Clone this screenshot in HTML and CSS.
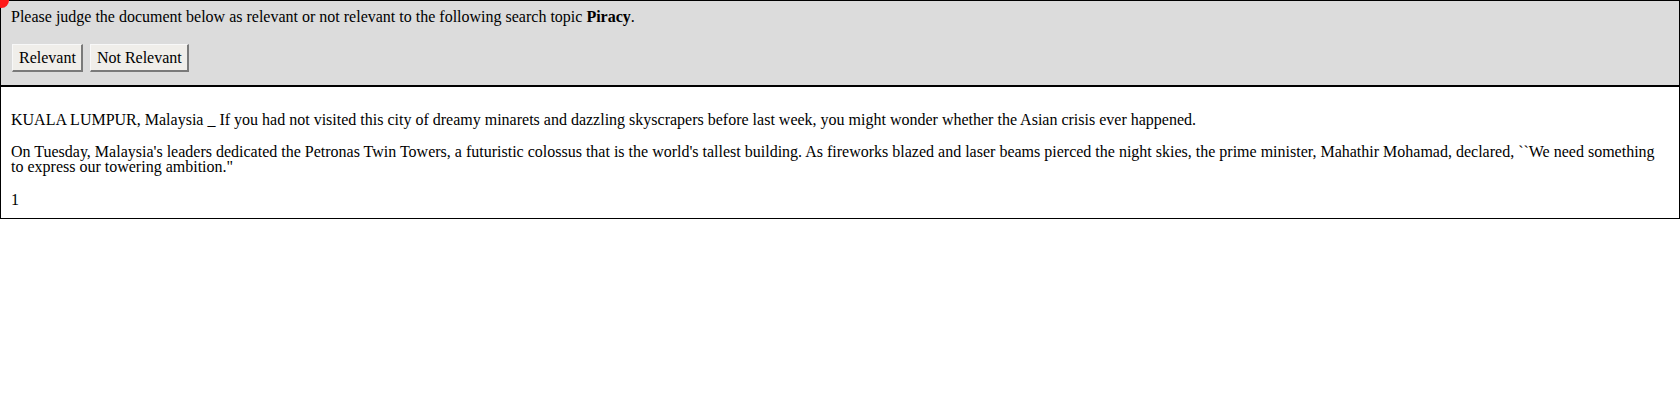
FILE: index.html
```html
<!DOCTYPE html>
<html>
<head>
<meta charset="utf-8">
<link rel="stylesheet" href="styles.css">
</head>
<body>
<span class="dot"></span>
<div class="header">
  <p class="question">Please judge the document below as relevant or not relevant to the following search topic <b>Piracy</b>.</p>
  <div class="actions">
    <button class="btn">Relevant</button>
    <button class="btn">Not Relevant</button>
  </div>
</div>
<div class="doc">
  <p class="para">KUALA LUMPUR, Malaysia _ If you had not visited this city of dreamy minarets and dazzling skyscrapers before last week, you might wonder whether the Asian crisis ever happened.</p>
  <p class="para">On Tuesday, Malaysia's leaders dedicated the Petronas Twin Towers, a futuristic colossus that is the world's tallest building. As fireworks blazed and laser beams pierced the night skies, the prime minister, Mahathir Mohamad, declared, ``We need something to express our towering ambition."</p>
  <p class="page">1</p>
</div>
</body>
</html>
```
FILE: styles.css
```css
html, body {
  margin: 0;
  padding: 0;
  background: #fff;
}
body {
  font-family: "Liberation Serif", "Times New Roman", serif;
  font-size: 16px;
  line-height: 15px;
  color: #000;
  position: relative;
}
.dot {
  position: absolute;
  left: -6px;
  top: -7px;
  width: 15px;
  height: 15px;
  border-radius: 50%;
  background: #ff1a1a;
  z-index: 2;
}
.header {
  background: #dcdcdc;
  border: 1px solid #000;
  padding: 8px 10px 13px 10px;
}
.question {
  margin: 0;
}
.actions {
  display: flex;
  gap: 7px;
  margin-top: 20px;
  padding-left: 1px;
}
.btn {
  font-family: "Liberation Serif", "Times New Roman", serif;
  font-size: 16px;
  line-height: 18px;
  height: 28px;
  padding: 3px 5px 3px 6px;
  margin: 0;
  background: #f0eeea;
  color: #000;
  border-style: solid;
  border-width: 1px 2px 2px 1px;
  border-color: #f8f8f8 #7a7a7a #7a7a7a #f8f8f8;
  border-radius: 0;
}
.doc {
  border: 1px solid #000;
  padding: 25px 10px 11px 10px;
}
.para {
  margin: 0 0 17px 0;
}
.para:nth-of-type(2) {
  margin-bottom: 0;
}
.page {
  margin: 18px 0 0 0;
}
```
